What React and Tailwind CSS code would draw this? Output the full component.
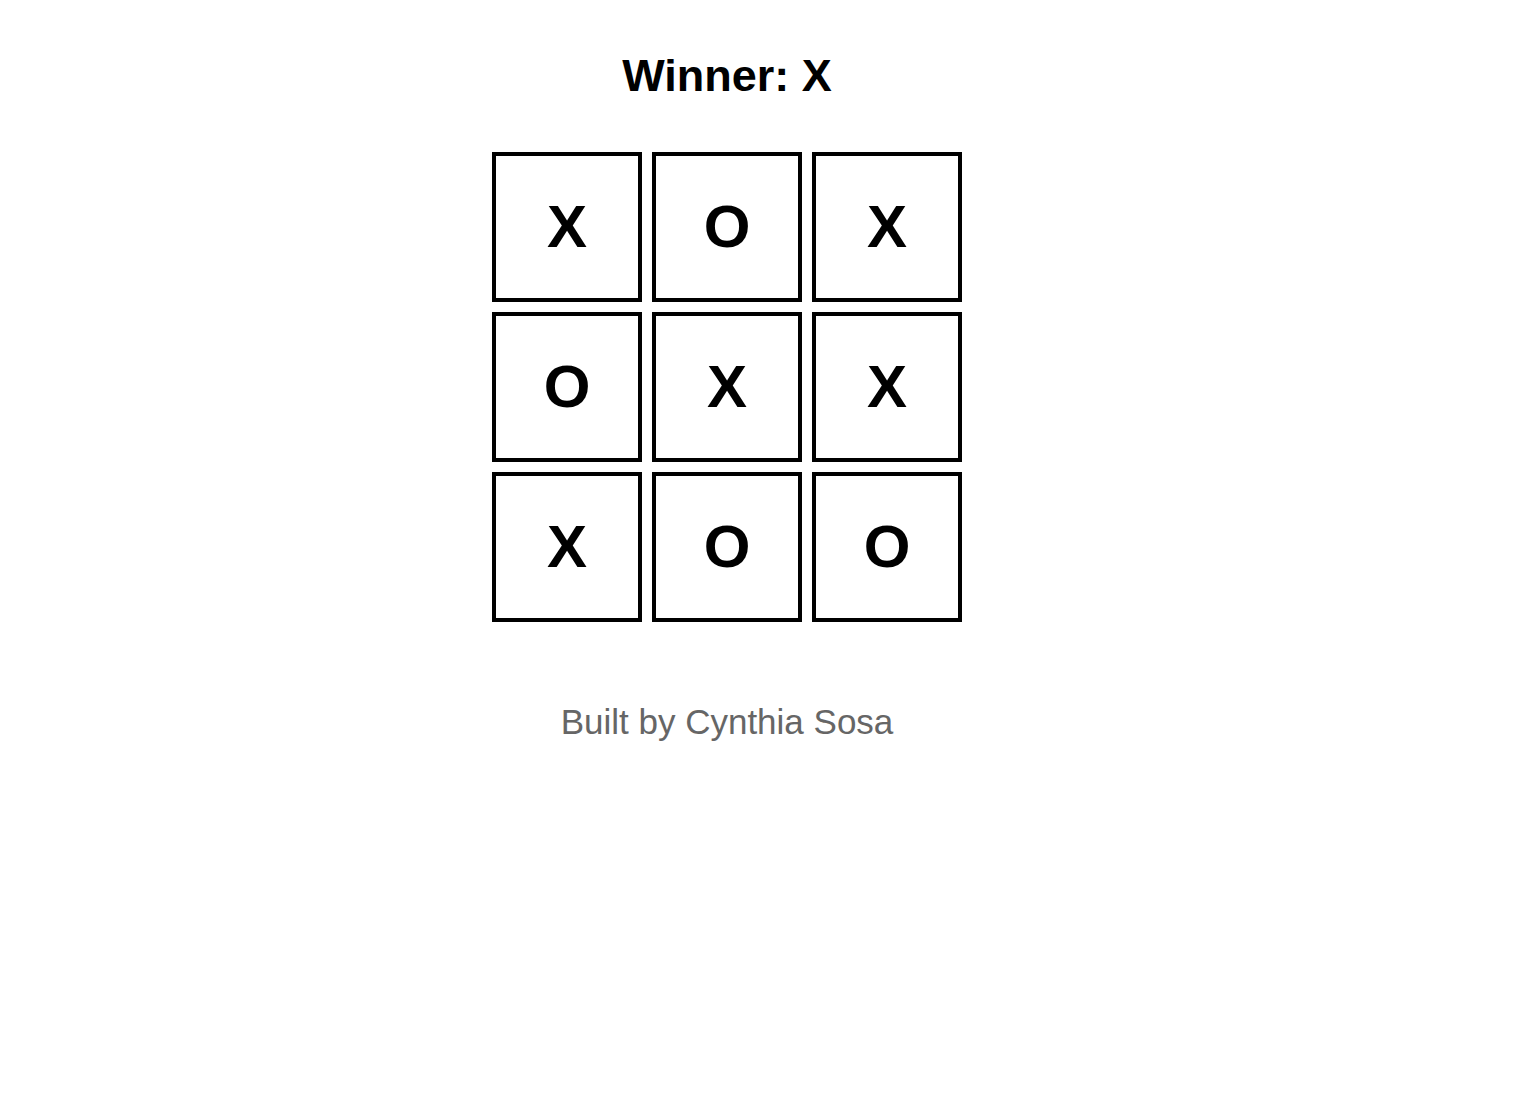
const board = ['X', 'O', 'X', 'O', 'X', 'X', 'X', 'O', 'O'];

const Square = ({ value }) => (
  <button
    type="button"
    className="w-[150px] h-[150px] border-4 border-black bg-white flex items-center justify-center text-[60px] font-bold leading-none text-black"
  >
    {value}
  </button>
);

const App = () => {
  return (
    <div className="min-h-screen bg-white font-['Liberation_Sans',Arial,sans-serif]">
      <div className="w-[1454px] flex flex-col items-center">
        <h1 className="mt-[53px] text-[45px] font-bold leading-none text-black">
          Winner: X
        </h1>

        <div className="mt-[54px] grid grid-cols-[150px_150px_150px] gap-x-[10px] gap-y-[10px]">
          {board.map((v, i) => (
            <Square key={i} value={v} />
          ))}
        </div>

        <p className="mt-[82px] text-[35px] leading-none text-[#666666]">
          Built by Cynthia Sosa
        </p>
      </div>
    </div>
  );
};

export default App;
